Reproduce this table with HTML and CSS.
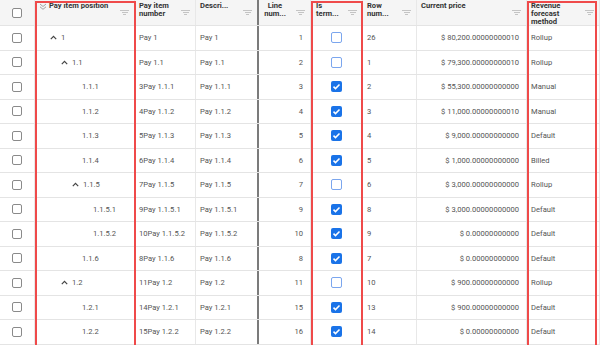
FILE: index.html
```html
<!DOCTYPE html>
<html lang="en">
<head>
    <meta charset="UTF-8">
    <title>Pay items grid</title>
    <link rel="stylesheet" href="styles.css">
</head>
<body>
    <div class="grid">
        <div class="row head">
            <div class="cell center"><span class="box"></span></div>
            <div class="cell">
                <svg class="expand-all" width="8" height="7" viewBox="0 0 8 7"><path d="M1 1l3 2.5L7 1M1 3.8l3 2.5 3-2.5" fill="none" stroke="#999" stroke-width="0.9"/></svg>
                <span class="label wide">Pay item position</span><i class="filter"></i>
            </div>
            <div class="cell"><span class="label">Pay item number</span><i class="filter"></i></div>
            <div class="cell frozen"><span class="label">Descri...</span><i class="filter"></i></div>
            <div class="cell"><span class="label mid">Line num...</span><i class="filter"></i></div>
            <div class="cell"><span class="label tiny">Is term...</span><i class="filter"></i></div>
            <div class="cell"><span class="label narrow">Row num...</span><i class="filter"></i></div>
            <div class="cell"><span class="label wide">Current price</span><i class="filter"></i></div>
            <div class="cell"><span class="label narrow">Revenue forecast method</span><i class="filter"></i></div>
        </div>
        <div id="rows"></div>

        <div class="mark mark-position"></div>
        <div class="mark mark-term"></div>
        <div class="mark mark-revenue"></div>
    </div>

    <script>
        const items = [
            [0, true, '1', 'Pay 1', 'Pay 1', 1, false, 26, '$ 80,200.00000000010', 'Rollup'],
            [1, true, '1.1', 'Pay 1.1', 'Pay 1.1', 2, false, 1, '$ 79,300.00000000010', 'Rollup'],
            [2, false, '1.1.1', '3Pay 1.1.1', 'Pay 1.1.1', 3, true, 2, '$ 55,300.00000000000', 'Manual'],
            [2, false, '1.1.2', '4Pay 1.1.2', 'Pay 1.1.2', 4, true, 3, '$ 11,000.00000000010', 'Manual'],
            [2, false, '1.1.3', '5Pay 1.1.3', 'Pay 1.1.3', 5, true, 4, '$ 9,000.00000000000', 'Default'],
            [2, false, '1.1.4', '6Pay 1.1.4', 'Pay 1.1.4', 6, true, 5, '$ 1,000.00000000000', 'Billed'],
            [2, true, '1.1.5', '7Pay 1.1.5', 'Pay 1.1.5', 7, false, 6, '$ 3,000.00000000000', 'Rollup'],
            [3, false, '1.1.5.1', '9Pay 1.1.5.1', 'Pay 1.1.5.1', 9, true, 8, '$ 3,000.00000000000', 'Default'],
            [3, false, '1.1.5.2', '10Pay 1.1.5.2', 'Pay 1.1.5.2', 10, true, 9, '$ 0.00000000000', 'Default'],
            [2, false, '1.1.6', '8Pay 1.1.6', 'Pay 1.1.6', 8, true, 7, '$ 0.00000000000', 'Default'],
            [1, true, '1.2', '11Pay 1.2', 'Pay 1.2', 11, false, 10, '$ 900.00000000000', 'Rollup'],
            [2, false, '1.2.1', '14Pay 1.2.1', 'Pay 1.2.1', 15, true, 13, '$ 900.00000000000', 'Default'],
            [2, false, '1.2.2', '15Pay 1.2.2', 'Pay 1.2.2', 16, true, 14, '$ 0.00000000000', 'Default']
        ];

        const chevron = '<svg class="chevron" width="7" height="5" viewBox="0 0 7 5"><path d="M0.8 4.2L3.5 1.4l2.7 2.8" fill="none" stroke="#444" stroke-width="1.2"/></svg>';

        let html = '';
        for (const [level, parent, pos, num, desc, line, term, rowNum, price, method] of items) {
            html += `
                <div class="row">
                    <div class="cell center"><span class="box"></span></div>
                    <div class="cell tree" style="padding-left:${15 + level * 11}px">${parent ? chevron : '<span class="gap"></span>'}${pos}</div>
                    <div class="cell">${num}</div>
                    <div class="cell frozen">${desc}</div>
                    <div class="cell right">${line}</div>
                    <div class="cell center"><span class="box ${term ? 'checked' : 'blue'}"></span></div>
                    <div class="cell">${rowNum}</div>
                    <div class="cell right">${price}</div>
                    <div class="cell">${method}</div>
                </div>
            `;
        }
        document.getElementById('rows').innerHTML = html;
    </script>
</body>
</html>
```

FILE: styles.css
```css
* { margin: 0; padding: 0; box-sizing: border-box; }
body { font-family: Roboto, "Liberation Sans", sans-serif; background: #fff; color: #555; font-size: 7.6px; }
.grid { position: relative; width: 600px; }
.row { display: grid; grid-template-columns: 35px 100px 61px 63px 52px 52px 54px 110px 73px; height: 24.5px; border-bottom: 1px solid #e4e4e4; }
.row.head { height: 26px; background: #f5f5f5; color: #333; font-weight: bold; }
.cell { display: flex; align-items: center; padding: 0 5px 0 4px; border-right: 1px solid #e8e8e8; white-space: nowrap; overflow: hidden; }
.cell.frozen { border-right: 2px solid #7b7b7b; }
.cell.right { justify-content: flex-end; padding-right: 7px; }
.cell.center { justify-content: center; padding: 0; }
.head .cell { align-items: flex-start; padding-top: 2px; position: relative; }
.head .cell.center { align-items: center; padding-top: 0; }
.label { white-space: normal; line-height: 8px; width: 36px; }
.label.wide { width: auto; }
.label.narrow { width: 34px; }
.label.tiny { width: 22px; margin-left: 1px; }
.label.mid { width: 22px; margin-left: 1px; text-align: center; }
.expand-all { margin: 1px 2px 0 0; flex: none; }
.filter { position: absolute; right: 5px; top: 10px; width: 9px; height: 5px;
    background: linear-gradient(#c4c4c4, #c4c4c4) 0 0 / 9px 1px no-repeat,
                linear-gradient(#c4c4c4, #c4c4c4) 1.5px 2px / 6px 1px no-repeat,
                linear-gradient(#c4c4c4, #c4c4c4) 3px 4px / 3px 1px no-repeat; }
.box { display: inline-block; width: 10px; height: 10px; border: 1px solid #8a8a8a; border-radius: 2px; background: #fff; }
.box.blue { width: 11px; height: 11px; border: 1.5px solid #7ba6ee; }
.box.checked { width: 11px; height: 11px; border: none; background: #1a73e8 url("data:image/svg+xml,%3Csvg xmlns='http://www.w3.org/2000/svg' viewBox='0 0 11 11'%3E%3Cpath d='M2.5 5.6l2 2 4-4.2' fill='none' stroke='white' stroke-width='1.5'/%3E%3C/svg%3E") center / 11px no-repeat; }
.chevron { margin-right: 4px; flex: none; }
.gap { display: inline-block; width: 0; }
.tree .gap { width: 10px; }
.mark { position: absolute; top: 1px; height: 350px; border: 2px solid #ef4a4a; pointer-events: none; }
.mark-position { left: 35px; width: 101px; }
.mark-term { left: 311px; width: 52px; }
.mark-revenue { left: 527px; width: 70px; }
```
